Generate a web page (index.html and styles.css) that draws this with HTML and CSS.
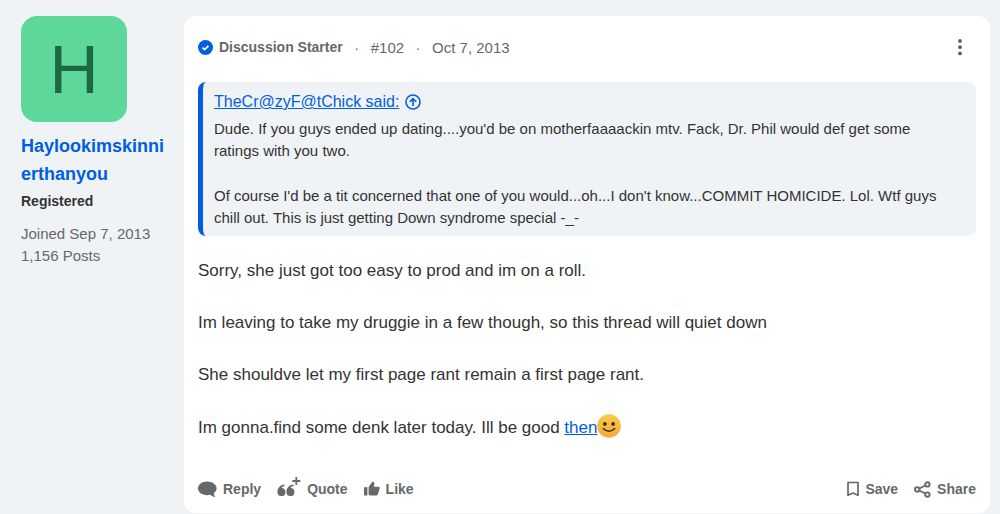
FILE: index.html
```html
<!DOCTYPE html>
<html lang="en">
<head>
    <meta charset="UTF-8">
    <meta name="viewport" content="width=device-width, initial-scale=1.0">
    <title>Post #102</title>
    <link rel="stylesheet" href="styles.css">
</head>
<body>
    <article class="message">
        <aside class="user">
            <a class="avatar" href="#">H</a>
            <a class="username" href="#">Haylookimskinnierthanyou</a>
            <div class="user-title">Registered</div>
            <div class="user-stats">
                <div>Joined Sep 7, 2013</div>
                <div>1,156 Posts</div>
            </div>
        </aside>

        <div class="card">
            <header class="post-header">
                <svg class="badge" width="15" height="15" viewBox="0 0 16 16">
                    <circle cx="8" cy="8" r="8" fill="#005fe0"/>
                    <path d="M4.9 8.2l2.1 2.1 4.1-4.1" fill="none" stroke="#fff" stroke-width="1.8"/>
                </svg>
                <span class="starter">Discussion Starter</span>
                <span class="dot">·</span>
                <a href="#">#102</a>
                <span class="dot">·</span>
                <time datetime="2013-10-07">Oct 7, 2013</time>
                <button class="menu" type="button" aria-label="More options">
                    <svg width="6" height="18" viewBox="0 0 6 18" fill="#5c5f61">
                        <circle cx="3" cy="3" r="1.9"/>
                        <circle cx="3" cy="9.2" r="1.9"/>
                        <circle cx="3" cy="15.4" r="1.9"/>
                    </svg>
                </button>
            </header>

            <blockquote class="quote">
                <div class="quote-title">
                    <a href="#">TheCr@zyF@tChick said:</a>
                    <svg width="16" height="16" viewBox="0 0 16 16" fill="none" stroke="#005fe0" stroke-width="1.6">
                        <circle cx="8" cy="8" r="7"/>
                        <path d="M8 12V4.600M4.800 7.800L8 4.600l3.200 3.200"/>
                    </svg>
                </div>
                <p>Dude. If you guys ended up dating....you'd be on motherfaaaackin mtv. Fack, Dr. Phil would def get some ratings with you two.</p>
                <p>Of course I'd be a tit concerned that one of you would...oh...I don't know...COMMIT HOMICIDE. Lol. Wtf guys chill out. This is just getting Down syndrome special -_-</p>
            </blockquote>

            <div class="post-body">
                <p>Sorry, she just got too easy to prod and im on a roll.</p>
                <p>Im leaving to take my druggie in a few though, so this thread will quiet down</p>
                <p>She shouldve let my first page rant remain a first page rant.</p>
                <p>Im gonna.find some denk later today. Ill be good <a href="#">then</a><svg class="smiley" width="24" height="24" viewBox="0 0 24 24">
                        <defs>
                            <linearGradient id="face" x1="0" y1="0" x2="0" y2="1">
                                <stop offset="0" stop-color="#fccb45"/>
                                <stop offset="1" stop-color="#f9a63a"/>
                            </linearGradient>
                        </defs>
                        <circle cx="12" cy="12" r="11.8" fill="url(#face)"/>
                        <ellipse cx="7.900" cy="9.900" rx="1.800" ry="1.900" fill="#2b2b33"/>
                        <ellipse cx="16.100" cy="9.900" rx="1.800" ry="1.900" fill="#2b2b33"/>
                        <path d="M6.300 14.400Q12 20 17.700 14.400" fill="none" stroke="#2b2b33" stroke-width="1.400" stroke-linecap="round"/>
                    </svg></p>
            </div>

            <footer class="actions">
                <button type="button">
                    <svg width="19" height="18" viewBox="0 0 20 18" fill="#65696b">
                        <path d="M9.600 1C4.200 1 0 4 0 8.300s4.200 7.200 9.600 7.200c1.200 0 2.300-.1 3.300-.4 1.200 1.300 3.100 2.200 5.200 2.300-.9-1-1.400-2.600-1.400-4.100 1.900-1.200 2.900-3 2.900-5C19.600 4 15 1 9.600 1z"/>
                    </svg>
                    Reply
                </button>
                <button type="button">
                    <svg class="quote-icon" width="24" height="20" viewBox="0 0 24 20" fill="#65696b">
                        <path d="M7.500 7.500C3 8 .4 11 .4 15a4 4 0 1 0 4.200-4c.4-1 1.400-1.700 2.900-2z"/>
                        <path d="M16.500 7.500c-4.500.5-7.100 3.500-7.100 7.500a4 4 0 1 0 4.200-4c.4-1 1.400-1.700 2.900-2z"/>
                        <path d="M19.300 0v8M15.300 4h8" fill="none" stroke="#65696b" stroke-width="1.800"/>
                    </svg>
                    Quote
                </button>
                <button type="button">
                    <svg width="16" height="16" viewBox="0 0 16 16" fill="#65696b">
                        <path d="M0 6.200h3.400v8.400H0zM4.600 6L8.300.8c1.500-.3 2.400.7 2.100 2.200L9.800 5.800h4.500c1.100 0 1.700.9 1.400 1.800l-1.800 5.700c-.3.900-.9 1.300-1.900 1.300H6.200l-1.600-1z"/>
                    </svg>
                    Like
                </button>
                <button class="save" type="button">
                    <svg width="12" height="16" viewBox="0 0 12 16" fill="none" stroke="#65696b" stroke-width="1.700">
                        <path d="M1 1.500h10v12.700l-5-2.200-5 2.200z" stroke-linejoin="round"/>
                    </svg>
                    Save
                </button>
                <button type="button">
                    <svg width="17" height="17" viewBox="0 0 17 17" fill="none" stroke="#65696b" stroke-width="1.900">
                        <circle cx="3.200" cy="8.500" r="2.200"/>
                        <circle cx="13.400" cy="3.400" r="2.200"/>
                        <circle cx="13.400" cy="13.600" r="2.200"/>
                        <path d="M5.300 7.500l6-3M5.300 9.500l6 3"/>
                    </svg>
                    Share
                </button>
            </footer>
        </div>
    </article>
</body>
</html>
```

FILE: styles.css
```css
* {
    box-sizing: border-box;
}

body {
    margin: 0;
    font-family: "Liberation Sans", Arial, sans-serif;
    font-size: 15px;
    background-color: #f0f3f5;
    color: #333;
}

a {
    color: #005fe0;
}

p {
    margin: 0;
}

svg {
    flex: none;
}

.message {
    display: flex;
    gap: 16px;
    padding: 16px 10px 0 21px;
}

.user {
    flex: none;
    width: 147px;
    line-height: 22px;
}

.avatar {
    display: flex;
    align-items: center;
    justify-content: center;
    width: 106px;
    height: 106px;
    margin-bottom: 10px;
    border-radius: 16px;
    background-color: #5dd89a;
    color: #1c6840;
    font-size: 68px;
    text-decoration: none;
}

.username {
    display: block;
    font-size: 18px;
    font-weight: bold;
    line-height: 28px;
    text-decoration: none;
    word-break: break-all;
}

.user-title {
    margin-top: 2px;
    font-size: 14px;
    font-weight: bold;
}

.user-stats {
    margin-top: 11px;
    color: #65696b;
}

.card {
    flex: 1;
    min-width: 0;
    padding: 16px 14px 12px;
    border-radius: 12px;
    background-color: #fff;
}

.post-header {
    display: flex;
    align-items: center;
    height: 30px;
    margin-bottom: 20px;
    color: #65696b;
}

.post-header a {
    color: inherit;
    text-decoration: none;
}

.starter {
    margin-left: 6px;
    font-size: 14px;
    font-weight: bold;
}

.dot {
    width: 28px;
    text-align: center;
}

.menu {
    margin-left: auto;
    padding: 0 13px;
}

button {
    display: flex;
    align-items: center;
    gap: 6px;
    padding: 0;
    border: none;
    background: none;
    color: #65696b;
    font-family: inherit;
    font-size: 14px;
    font-weight: bold;
    cursor: pointer;
}

.quote {
    margin: 0 0 22px;
    padding: 9px 24px 7px 11px;
    border-left: 5px solid #005fe0;
    border-radius: 8px;
    background-color: #f0f3f5;
    line-height: 22px;
}

.quote p + p {
    margin-top: 23px;
}

.quote-title {
    display: flex;
    align-items: center;
    gap: 6px;
    height: 22px;
    margin-bottom: 5px;
    font-size: 16px;
}

.post-body {
    font-size: 17px;
    line-height: 26px;
}

.post-body p + p {
    margin-top: 26px;
}

.smiley {
    vertical-align: -5px;
}

.actions {
    display: flex;
    align-items: center;
    gap: 16px;
    height: 24px;
    margin-top: 36px;
}

.quote-icon {
    margin-bottom: 4px;
}

.save {
    margin-left: auto;
}
```
